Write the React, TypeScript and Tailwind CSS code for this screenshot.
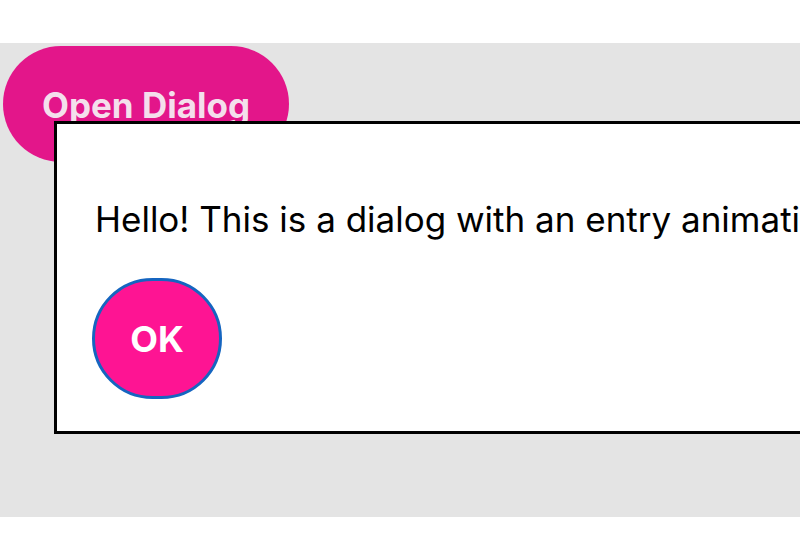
export default function App() {
  return (
    <div className="w-[800px] h-[560px] bg-white overflow-hidden flex flex-col" style={{ fontFamily: 'Inter, "Liberation Sans", Arial, sans-serif' }}>
      <div className="h-[43px] shrink-0 bg-white" />
      <div className="relative h-[474px] shrink-0 bg-[#e4e4e4] overflow-hidden">
        <button className="ml-[3px] mt-[3px] w-[286px] h-[116px] rounded-full bg-[#e3168a] text-[#f4dfec] text-[35px] font-bold pt-[2px]">
          Open Dialog
        </button>
        <div className="absolute left-[54px] top-[78px] w-[800px] h-[313px] bg-white border-[3px] border-black px-[35px] pt-[75px]">
          <p className="text-[35px] leading-[40px] text-black whitespace-nowrap pl-[3px]">
            Hello! This is a dialog with an entry animation.
          </p>
          <button className="mt-[39px] w-[130px] h-[121px] rounded-full bg-[#fe1493] border-[3px] border-[#1565c0] text-white text-[36px] font-bold">
            OK
          </button>
        </div>
      </div>
      <div className="flex-1 bg-white" />
    </div>
  )
}
